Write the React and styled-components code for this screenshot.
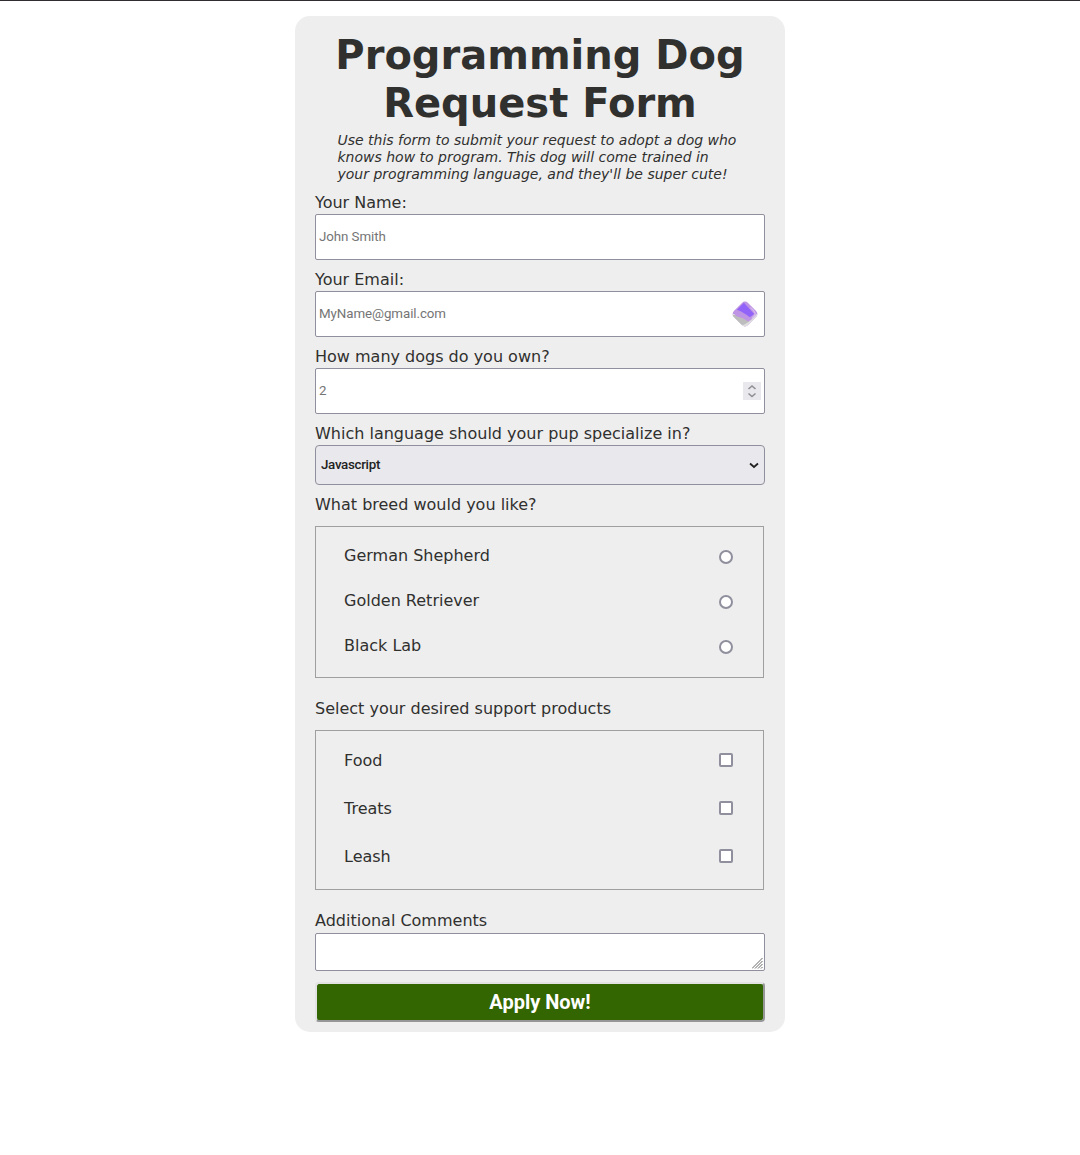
import React from "react";
import styled, { createGlobalStyle, css } from "styled-components";

const GlobalStyle = createGlobalStyle`
  * { box-sizing: border-box; }
  body {
    margin: 0;
    background: #fff;
    color: #30302e;
    font-family: "DejaVu Sans", sans-serif;
    font-size: 16px;
    line-height: 19px;
  }
`;

const Page = styled.main`
  min-height: 1155px;
  padding-top: 15px;
  border-top: 1px solid #302d30;
`;

const Card = styled.form`
  width: 490px;
  height: 1016px;
  margin: 0 auto;
  padding: 15px 20px 10px;
  border-radius: 15px;
  background: #eee;
  display: flex;
  flex-direction: column;
`;

const Title = styled.h1`
  margin: 0;
  font-size: 40px;
  line-height: 48px;
  font-weight: 700;
  text-align: center;
`;

const Description = styled.p`
  margin: 5px 22px 10px 22.5px;
  font-size: 14px;
  line-height: 17px;
  font-style: italic;
`;

const Field = styled.div`
  display: flex;
  flex-direction: column;
  gap: ${(p) => p.$gap ?? 2}px;
  margin-bottom: ${(p) => p.$after ?? 10}px;
`;

const InputFrame = styled.div`
  display: flex;
  align-items: center;
  height: 46px;
  padding: 0 3px;
  border: 1px solid #8f8f9d;
  border-radius: 2px;
  background: #fff;
`;

const controlFont = css`
  font-family: Roboto, sans-serif;
  font-size: 13.33px;
`;

const TextInput = styled.input`
  ${controlFont}
  flex: 1;
  min-width: 0;
  height: 30px;
  padding: 0 0 2px;
  border: 0;
  outline: 0;
  background: transparent;
  letter-spacing: -0.07px;
  &::placeholder { color: #757575; opacity: 1; }
`;

const ManagerIcon = styled.svg`
  width: 28px;
  height: 28px;
  margin: 0 2px 1px 0;
`;

const Stepper = styled.span`
  display: grid;
  place-items: center;
  width: 18px;
  height: 18px;
  background: #e9e9ed;
`;

const SelectFrame = styled.div`
  display: flex;
  align-items: center;
  height: 40px;
  padding: 0 5px;
  border: 1px solid #8f8f9d;
  border-radius: 4px;
  background: #e9e9ed;
`;

const Select = styled.select`
  ${controlFont}
  appearance: none;
  flex: 1;
  padding: 0 0 2px;
  border: 0;
  color: #222;
  font-weight: 500;
  letter-spacing: -0.3px;
  background: transparent;
`;

const Group = styled.div`
  display: flex;
  flex-direction: column;
  width: 449px;
  height: ${(p) => p.$height}px;
  padding: ${(p) => p.$top}px 30px 0 28px;
  gap: ${(p) => p.$gap}px;
  border: 1px solid #9f9f9f;
`;

const Option = styled.label`
  display: flex;
  align-items: flex-start;
  justify-content: space-between;
`;

const Choice = styled.input`
  appearance: none;
  width: 14px;
  height: 14px;
  margin: ${(p) => p.$drop}px 0 0;
  border: 2px solid #8f8f9d;
  border-radius: ${(p) => (p.type === "radio" ? "50%" : "2px")};
  background: #fff;
`;

const CommentFrame = styled.div`
  display: flex;
  align-items: flex-end;
  height: 38px;
  padding: 1px;
  border: 1px solid #8f8f9d;
  border-radius: 2px;
  background: #fff;
`;

const Comments = styled.textarea`
  flex: 1;
  height: 30px;
  padding: 0;
  border: 0;
  outline: 0;
  resize: none;
  background: transparent;
`;

const Submit = styled.button`
  height: 40px;
  padding: 0;
  border: 2px solid;
  border-color: #e3e3e3 #979797 #979797 #e3e3e3;
  border-radius: 4px;
  background: #360;
  color: #fff;
  font: 700 20px/34px Roboto, sans-serif;
`;

function PasswordManagerIcon() {
  return (
    <ManagerIcon viewBox="0 0 26 26">
      <defs>
        <clipPath id="tile">
          <rect x="3.7" y="3.7" width="18.6" height="18.6" rx="4" transform="rotate(45 13 13)" />
        </clipPath>
      </defs>
      <g clipPath="url(#tile)">
        <rect width="26" height="26" fill="#bf94e4" />
        <path d="M0 13h5l8 3 5 3 8-8v15H0z" fill="#dfdfdf" />
        <path d="M0 14h6l8 4 3 2-5 3H0z" fill="#bdbdbd" />
        <path d="M2 12 7 10l12 8-3 2-5-3-6-2z" fill="#bf94e4" />
        <path d="M5.5 9 12 2.5 21.5 13 17.5 16 14 13.5 9 10.5z" fill="#9163f8" />
        <path d="M18 7q4 3 4.5 6l-3 4M21 10q3 3 0 6" fill="none" stroke="#d5b8ed" />
      </g>
    </ManagerIcon>
  );
}

function Options({ type, items, ...layout }) {
  return (
    <Group $height={layout.height} $top={layout.top} $gap={layout.gap}>
      {items.map((item) => (
        <Option key={item}>
          {item}
          <Choice type={type} name={type} $drop={layout.drop} />
        </Option>
      ))}
    </Group>
  );
}

export default function App() {
  return (
    <>
      <GlobalStyle />
      <Page>
        <Card>
          <Title>Programming Dog Request Form</Title>
          <Description>
            Use this form to submit your request to adopt a dog who knows how to
            program. This dog will come trained in your programming language, and
            they'll be super cute!
          </Description>
          <Field>
            <label htmlFor="name">Your Name:</label>
            <InputFrame><TextInput id="name" placeholder="John Smith" /></InputFrame>
          </Field>
          <Field>
            <label htmlFor="email">Your Email:</label>
            <InputFrame>
              <TextInput id="email" placeholder="MyName@gmail.com" />
              <PasswordManagerIcon />
            </InputFrame>
          </Field>
          <Field>
            <label htmlFor="dogs">How many dogs do you own?</label>
            <InputFrame>
              <TextInput id="dogs" placeholder="2" />
              <Stepper>
                <svg width="10" height="14" viewBox="0 0 10 14" fill="none" stroke="#8f8f94" strokeWidth="1.6">
                  <path d="M1.5 5 5 2 8.5 5M1.5 9.5 5 12.5 8.5 9.5" />
                </svg>
              </Stepper>
            </InputFrame>
          </Field>
          <Field>
            <label htmlFor="language">Which language should your pup specialize in?</label>
            <SelectFrame>
              <Select id="language"><option>Javascript</option></Select>
              <svg width="10" height="8" viewBox="0 0 10 8" fill="none" stroke="#222" strokeWidth="1.8">
                <path d="M1 2.5 5 6 9 2.5" />
              </svg>
            </SelectFrame>
          </Field>
          <Field $gap={12} $after={21}>
            <span>What breed would you like?</span>
            <Options type="radio" height={152} top={19} gap={26} drop={4}
              items={["German Shepherd", "Golden Retriever", "Black Lab"]} />
          </Field>
          <Field $gap={12} $after={21}>
            <span>Select your desired support products</span>
            <Options type="checkbox" height={160} top={20} gap={29} drop={2}
              items={["Food", "Treats", "Leash"]} />
          </Field>
          <Field $gap={3} $after={11}>
            <label htmlFor="comments">Additional Comments</label>
            <CommentFrame>
              <Comments id="comments" />
              <svg width="11" height="11" viewBox="0 0 11 11" stroke="#666" strokeWidth="1">
                <path d="M0 10.5 10.5 0M3 10.5 10.5 3M6 10.5 10.5 6M9 10.5 10.5 9" />
              </svg>
            </CommentFrame>
          </Field>
          <Submit type="button">Apply Now!</Submit>
        </Card>
      </Page>
    </>
  );
}
